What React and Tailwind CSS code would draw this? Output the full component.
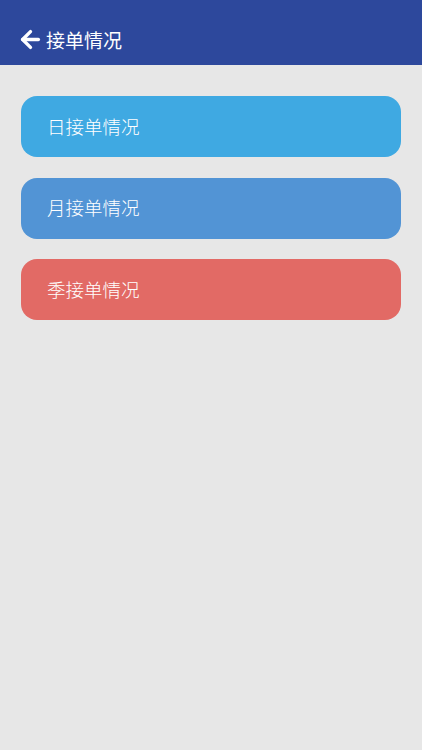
import { ArrowLeft } from "lucide-react";

const items = [
  { label: "日接单情况", color: "bg-[#3fa9e2]" },
  { label: "月接单情况", color: "bg-[#5294d5]" },
  { label: "季接单情况", color: "bg-[#e26a65]" },
];

export default function App() {
  return (
    <div
      className="min-h-[750px] bg-[#e7e7e7]"
      style={{ fontFamily: '"Noto Sans CJK SC", "Noto Sans", sans-serif' }}
    >
      {/* title bar */}
      <div className="h-[65px] bg-[#2d489c] flex items-end pb-[12px] pl-[17px] text-white">
        <ArrowLeft className="w-[27px] h-[27px]" strokeWidth={3} />
        <span className="ml-[2px] text-[19px] leading-[26px]">接单情况</span>
      </div>

      <div className="flex flex-col gap-[20.5px] px-[21px] pt-[31px]">
        {items.map((it) => (
          <button
            key={it.label}
            className={`${it.color} h-[61px] rounded-[16px] flex items-center pl-[26px] text-white text-[18.5px] font-light text-left`}
          >
            {it.label}
          </button>
        ))}
      </div>
    </div>
  );
}
